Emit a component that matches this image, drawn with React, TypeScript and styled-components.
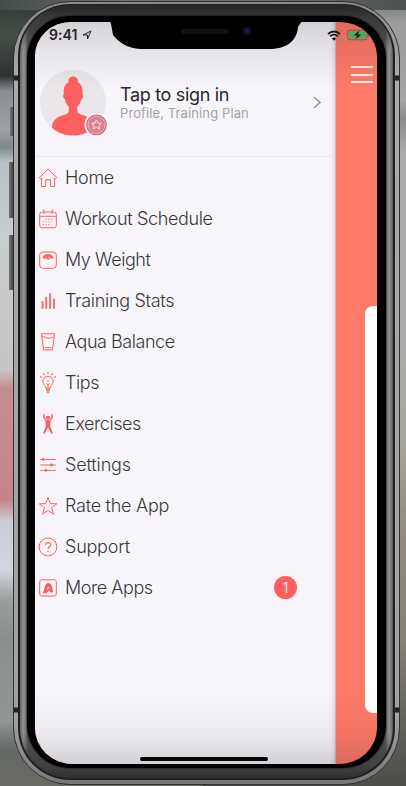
import React from "react";
import styled, { createGlobalStyle } from "styled-components";

const coral = "#ff5f61";

const GlobalStyle = createGlobalStyle`
  * { box-sizing: border-box; }
  body { margin: 0; overflow: hidden; font-family: Inter, "Liberation Sans", sans-serif; }
`;

const Scene = styled.div`
  width: 406px;
  height: 786px;
  padding: 1px 6px 1px 13px;
  overflow: hidden;
  background:
    linear-gradient(90deg, #777, #3a3a3a) 10px 107px / 5px 29px no-repeat,
    linear-gradient(90deg, #777, #3a3a3a) 9px 162px / 5px 56px no-repeat,
    linear-gradient(90deg, #777, #3a3a3a) 9px 235px / 5px 55px no-repeat,
    linear-gradient(90deg, #454b49, #6b716c 30%, #666d69 65%, #4e5351) 0 0 / 100% 10px no-repeat,
    linear-gradient(180deg, #777 0, #9b9a9c 22px, #a5a4a7 100px, #8a8a8c 118px, #a9a8aa 150px, #aaa 340px, #a7a69c 440px, #918b80 530px, #858177 640px, #65655e 715px, #4c4e49 786px) 203px 0 / 203px 100% no-repeat,
    linear-gradient(180deg, #303a37 0, #454d46 35px, #2d3333 76px, #8a8d91 91px, #a0a3a5 130px, #7d8788 147px, #b9c1c4 162px, #c6cecf 240px, #c9c9c7 290px, #c4c4c4 370px, #c58e91 388px, #c58488 500px, #c8ccd3 521px, #d0d6df 570px, #999c9c 602px, #878e8e 640px, #929795 720px, #646864 750px, #686a63 786px) 0 0 / 203px 100% no-repeat;
`;

const Rim = styled.div`
  height: 784px;
  padding: 2px 4px 4px;
  border: 1px solid #303030;
  border-radius: 57px;
  background: linear-gradient(180deg, #888 0, #aaa 73px, #222 74px, #222 78px, #aaa 79px, #a1a1a1 705px, #222 706px, #222 710px, #a5a5a5 711px, #777 100%);
`;

const Band = styled.div`
  height: 100%;
  padding: 1px 2px 2px;
  border-radius: 52px;
  background: #202021;
`;

const Metal = styled.div`
  height: 100%;
  padding: 11px 7px 10px;
  border-radius: 50px;
  background:
    linear-gradient(180deg, #262626, #393939 12px, rgba(57,57,57,0) 45px),
    linear-gradient(0deg, #303030, #414141 12px, rgba(65,65,65,0) 45px),
    linear-gradient(90deg, #666, #8f8f8f 3px, #858585 5px, #505050 8px, #222 50%, #505050 calc(100% - 8px), #858585 calc(100% - 5px), #8f8f8f calc(100% - 3px), #555);
`;

const Bezel = styled.div`
  height: 100%;
  padding: 6px 9px 6px 8px;
  border-radius: 43px;
  background: #000;
  box-shadow: 0 0 2px #000;
`;

const Screen = styled.div`
  position: relative;
  display: flex;
  height: 742px;
  overflow: hidden;
  border-radius: 36px 37px 38px 38px / 34px 34px 36px 36px;
  background: #ff7969;
`;

const Drawer = styled.aside`
  width: 301px;
  flex: none;
  display: flex;
  flex-direction: column;
  background: #f7f5f9;
  border-right: 1px solid #d5b6bb;
  box-shadow: inset -4px 0 4px -3px #d2cfd5;
`;

const Profile = styled.header`
  height: 135px;
  padding: 47px 13px 0 4px;
  display: flex;
  align-items: flex-start;
  border-bottom: 1px solid #e8e6e9;
`;

const Avatar = styled.div`
  width: 69px;
  height: 69px;
  flex: none;
`;

const Account = styled.div`
  flex: 1;
  padding: 15px 0 0 12px;
  white-space: nowrap;
`;

const AccountTitle = styled.div`
  font-size: 18px;
  line-height: 21px;
  letter-spacing: -0.33px;
  color: #29292b;
`;

const AccountHint = styled.div`
  font-size: 13px;
  line-height: 16px;
  letter-spacing: 0.11px;
  color: #a4a2a6;
`;

const Chevron = styled.svg`
  width: 10px;
  height: 14px;
  margin: 27px 0 0;
`;

const Menu = styled.nav`
  display: flex;
  flex-direction: column;
`;

const MenuRow = styled.a`
  height: 41px;
  display: flex;
  align-items: center;
  padding-left: 2px;
  color: #39393c;
`;

const MenuIcon = styled.svg`
  width: 22px;
  height: 24px;
  flex: none;
  fill: none;
  stroke: ${coral};
  stroke-width: 1;
`;

const MenuLabel = styled.span<{ $spacing: number }>`
  margin-left: 6px;
  font-size: 18px;
  font-weight: 300;
  line-height: 24px;
  letter-spacing: ${(p) => p.$spacing}px;
  white-space: nowrap;
`;

const Count = styled.span`
  width: 23px;
  height: 23px;
  margin: 0 38px 0 auto;
  border-radius: 50%;
  background: ${coral};
  color: #fff;
  font-size: 14px;
  font-weight: 300;
  line-height: 23px;
  text-align: center;
`;

const MainView = styled.main`
  flex: 1;
  display: flex;
  flex-direction: column;
  overflow: hidden;
`;

const Hamburger = styled.div`
  width: 22px;
  height: 17px;
  margin: 44px 0 0 15px;
  display: flex;
  flex-direction: column;
  justify-content: space-between;
`;

const Line = styled.span`
  height: 2px;
  background: #ffece9;
`;

const Card = styled.section`
  width: 80px;
  height: 407px;
  margin: 223px 0 0 29px;
  border-radius: 8px;
  background: #fff;
`;

const Shade = styled.div`
  position: absolute;
  inset: 0;
  pointer-events: none;
  background:
    linear-gradient(180deg, rgba(30,30,35,.16), rgba(30,30,35,.09) 25px, rgba(30,30,35,0) 68px),
    linear-gradient(0deg, rgba(30,30,35,.17), rgba(30,30,35,.06) 28px, rgba(30,30,35,0) 70px);
`;

const StatusBar = styled.div`
  position: absolute;
  inset: 0 0 auto;
  height: 26px;
  display: flex;
  align-items: center;
  padding: 0 8px 0 14px;
`;

const Clock = styled.span`
  font-size: 14px;
  font-weight: 600;
  line-height: 16px;
  letter-spacing: 0.1px;
  color: #242427;
`;

const Location = styled.svg`
  width: 10px;
  height: 10px;
  margin: 0 auto 0 4px;
`;

const Wifi = styled.svg`
  width: 14px;
  height: 11px;
  margin-right: 6px;
`;

const Battery = styled.svg`
  width: 22px;
  height: 12px;
`;

const Notch = styled.svg`
  position: absolute;
  top: -1px;
  left: 75px;
  width: 192px;
  height: 29px;
`;

const HomeBar = styled.div`
  position: absolute;
  bottom: 3px;
  left: 105px;
  width: 128px;
  height: 4px;
  border-radius: 2px;
  background: #050505;
`;

const HomeIcon = () => (
  <path d="M2.3 11.6 11 3.3l8.8 8.3-1.2 1-.9-.6v8.5h-4.2v-6.7H8.7v6.7H4.6V12l-1.1.7z" />
);

const CalendarIcon = () => (
  <>
    <rect x="2.7" y="5" width="16.6" height="15.8" rx="2.4" />
    <path d="M3 9.3h16M6.8 2.5v4.8M15.2 2.5v4.8" />
    <path d="M8.5 12.3h8M5.5 15h11M5.5 17.7h8" strokeDasharray="1.5 1.2" strokeWidth="1.2" opacity=".7" />
  </>
);

const ScaleIcon = () => (
  <>
    <rect x="2.7" y="4" width="16.6" height="16.3" rx="3.2" />
    <path d="M5.3 10c1.8-5.3 9.6-5.3 11.4 0l-3.3 1c-.8-1.5-4-1.5-4.8 0z" fill={coral} stroke="none" />
    <path d="m11 11 .7-2.4M8 9l.8.8m4.4 0 .8-.8" stroke="#fff" strokeWidth=".8" />
    <circle cx="11" cy="10.7" r="1.1" fill={coral} stroke="none" />
  </>
);

const StatsIcon = () => (
  <path d="M5.5 19v-6M9.2 19V8.7M13.1 19V5M17 19v-8.5" strokeWidth="2" strokeLinecap="round" opacity=".9" />
);

const GlassIcon = () => (
  <path d="M4.5 3.7h13l-2 16.2H6.6zM5 6.8c3-.8 4.5 2 7.2 1.4 2-.4 2.4-1.4 4.9-.9M7.7 17.6h6.7" />
);

const BulbIcon = () => (
  <>
    <path d="M8.9 17.2c0-2.4-3.1-3.5-3.1-6.7a5.2 5.2 0 0 1 10.4 0c0 3.2-3.1 4.3-3.1 6.7z" />
    <path d="M11 17v-4.4m0-3.4v2.2m-1.4 1 1.4 1.5 1.4-1.5" />
    <path d="M9 19.1h4M9.5 21h3" strokeWidth="1.5" />
    <path d="M11 1.2v2M6.5 2.5l.9 1.6M15.5 2.5l-.9 1.6M3 5.6l1.7 1M19 5.6l-1.7 1" strokeWidth="1.2" />
  </>
);

const ExerciseIcon = () => (
  <>
    <circle cx="11" cy="5.8" r="2.1" fill={coral} stroke="none" />
    <path d="M7.4 1.8 6.7 5.4l2.9 4h2.8l2.9-4-.7-3.6" strokeWidth="1.4" />
    <path d="M8.4 8.3h5.2l-.5 5.6 2.8 7.3-1.3.8-3.6-6.2L7.4 22l-1.3-.8 2.8-7.3z" fill={coral} stroke="none" />
  </>
);

const SlidersIcon = () => (
  <>
    <path d="M3.2 6.5h15.6M3.2 12h15.6M3.2 17.4h15.6" />
    <g fill={coral} stroke="none">
      <circle cx="6.2" cy="6.5" r="1.4" />
      <circle cx="14.4" cy="12" r="1.4" />
      <circle cx="9" cy="17.4" r="1.4" />
    </g>
  </>
);

const StarIcon = () => (
  <path d="m11 3.5 2.3 6.1 6.5.2-5.2 4 1.9 6.3-5.5-3.7-5.4 3.7 1.8-6.3-5.1-4 6.5-.2z" />
);

const HelpIcon = () => (
  <>
    <circle cx="11" cy="12" r="8.9" />
    <path d="M8.6 10c.1-3.3 4.9-3.1 4.9-.2 0 1.9-2.5 2-2.5 4.2" strokeWidth="1.1" />
    <circle cx="11" cy="16.2" r=".8" fill={coral} stroke="none" />
  </>
);

const AppsIcon = () => (
  <>
    <rect x="2.7" y="3.8" width="16.6" height="16.3" rx="2.2" />
    <path d="M5.6 17.2c2.2-2.6 1.7-10 5.4-10.2 3.8-.2 4.4 5.1 5.2 8.8-1.1 1.1-2.7 1-3.4 0l-1-1.8-2 3.2zm4.3-3.3 2.1-1.3-.8-2.2z" fill={coral} fillRule="evenodd" stroke="none" />
  </>
);

const items = [
  { label: "Home", Icon: HomeIcon, spacing: -0.3 },
  { label: "Workout Schedule", Icon: CalendarIcon, spacing: -0.34 },
  { label: "My Weight", Icon: ScaleIcon, spacing: -0.42 },
  { label: "Training Stats", Icon: StatsIcon, spacing: -0.31 },
  { label: "Aqua Balance", Icon: GlassIcon, spacing: -0.46 },
  { label: "Tips", Icon: BulbIcon, spacing: -0.45 },
  { label: "Exercises", Icon: ExerciseIcon, spacing: -0.43 },
  { label: "Settings", Icon: SlidersIcon, spacing: -0.14 },
  { label: "Rate the App", Icon: StarIcon, spacing: -0.26 },
  { label: "Support", Icon: HelpIcon, spacing: -0.23 },
  { label: "More Apps", Icon: AppsIcon, spacing: -0.44, count: 1 },
];

export default function App() {
  return (
    <Scene>
      <GlobalStyle />
      <Rim><Band><Metal><Bezel>
        <Screen>
          <Drawer>
            <Profile>
              <Avatar>
                <svg width="69" height="69" viewBox="0 0 69 69">
                  <circle cx="34" cy="33.5" r="33" fill="#e9e7e9" />
                  <path d="M12.8 58.5c.5-9.5 8.4-11.6 13.7-13.1 3.3-.9 3.4-2.2 3.4-7.9-2-1.6-3.5-4.2-4-7.3-2-1-2.2-4.3-1-5.1-.8-5.7.7-9.8 4.6-12.1-1.3-7.5 10.5-7.5 9.3 0 3.9 2.3 5.3 6.4 4.6 12.1 1.2.8 1 4.1-1 5.1-.6 3.1-2 5.7-4 7.3 0 5.7.1 7 3.4 7.9 5.3 1.5 13.2 3.6 13.7 13.1-11.5 10.7-31.4 10.8-42.7 0z" fill={coral} />
                  <circle cx="57.5" cy="55.8" r="12" fill="#faf7fa" />
                  <circle cx="57.5" cy="55.8" r="10.4" fill="#ca6d8c" />
                  <circle cx="57.5" cy="55.8" r="8.6" fill="#df8092" stroke="#f1c7d1" strokeWidth=".8" />
                  <path d="m57.5 51 1.4 3 3.3.4-2.4 2.3.6 3.3-2.9-1.6-3 1.6.6-3.3-2.4-2.3 3.3-.4z" fill="none" stroke="#fbe5e9" />
                </svg>
              </Avatar>
              <Account>
                <AccountTitle>Tap to sign in</AccountTitle>
                <AccountHint>Profile, Training Plan</AccountHint>
              </Account>
              <Chevron viewBox="0 0 10 14"><path d="m2 1 6 5.5L2 12" fill="none" stroke="#939196" strokeWidth="1.5" /></Chevron>
            </Profile>
            <Menu>
              {items.map(({ label, Icon, spacing, count }) => (
                <MenuRow key={label}>
                  <MenuIcon viewBox="0 0 22 24"><Icon /></MenuIcon>
                  <MenuLabel $spacing={spacing}>{label}</MenuLabel>
                  {count && <Count>{count}</Count>}
                </MenuRow>
              ))}
            </Menu>
          </Drawer>
          <MainView>
            <Hamburger><Line /><Line /><Line /></Hamburger>
            <Card />
          </MainView>
          <Shade />
          <StatusBar>
            <Clock>9:41</Clock>
            <Location viewBox="0 0 10 10"><path d="M9 1 5.5 9V5H1z" fill="none" stroke="#242427" strokeWidth="1" /></Location>
            <Wifi viewBox="0 0 14 11"><path d="M1 4.2c3.5-3.6 8.5-3.6 12 0M3.1 6.4c2.2-2.3 5.6-2.3 7.8 0" fill="none" stroke="#171719" strokeWidth="1.8" /><path d="m4.9 8.5 2.1 2.2 2.1-2.2c-1.2-1.3-3-1.3-4.2 0z" fill="#171719" /></Wifi>
            <Battery viewBox="0 0 22 12">
              <rect x=".7" y="1.2" width="19.4" height="9.6" rx="2.5" fill="none" stroke="#8d5148" />
              <rect x="2" y="2.5" width="16.8" height="7" rx="1" fill="#3eb35c" />
              <path d="M21.4 4.3v3.4" stroke="#8d5148" />
              <path d="m12.5 1.5-6 5h3.6l-1.6 4 6-5h-3.6z" fill="#17251a" />
            </Battery>
          </StatusBar>
          <Notch viewBox="0 0 192 29">
            <path d="M0 0h192l-4 6c-1 12-9 22-29 22H34C16 28 8 20 3 14L1 3z" fill="#000" />
            <rect x="71" y="8" width="48" height="5" rx="2.5" fill="#111112" />
            <circle cx="137" cy="10" r="4.5" fill="#080a16" />
            <circle cx="137" cy="10" r="2.5" fill="#152052" />
          </Notch>
          <HomeBar />
        </Screen>
      </Bezel></Metal></Band></Rim>
    </Scene>
  );
}
